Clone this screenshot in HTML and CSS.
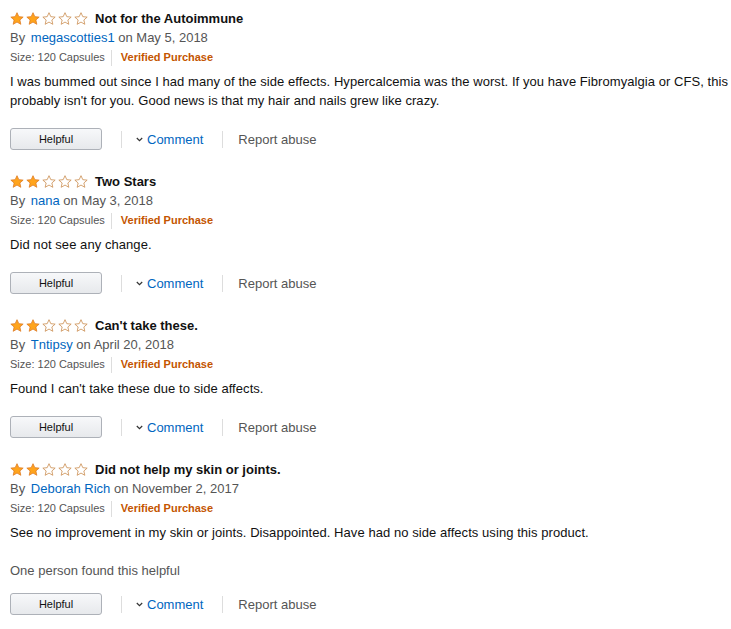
FILE: index.html
```html
<!DOCTYPE html>
<html>
<head>
<meta charset="utf-8">
<link rel="stylesheet" href="styles.css">
</head>
<body>
<svg width="0" height="0" class="defs">
  <defs>
    <symbol id="sf" viewBox="0 0 16 15">
      <path d="M8 0.8 L10.1 5.4 L15.1 5.9 L11.3 9.2 L12.4 14.2 L8 11.6 L3.6 14.2 L4.7 9.2 L0.9 5.9 L5.9 5.4 Z" fill="#ffa41c" stroke="#de7921" stroke-width="0.9" stroke-linejoin="round"/>
    </symbol>
    <symbol id="se" viewBox="0 0 16 15">
      <path d="M8 0.8 L10.1 5.4 L15.1 5.9 L11.3 9.2 L12.4 14.2 L8 11.6 L3.6 14.2 L4.7 9.2 L0.9 5.9 L5.9 5.4 Z" fill="#fff" stroke="#c98a4b" stroke-width="0.9" stroke-linejoin="round"/>
    </symbol>
    <symbol id="chev" viewBox="0 0 7 5">
      <path d="M0.8 1 L3.5 3.7 L6.2 1" fill="none" stroke="#333" stroke-width="1.2"/>
    </symbol>
  </defs>
</svg>
<div class="reviews">

  <div class="review">
    <div class="title-row">
      <span class="stars"><svg class="star"><use href="#sf"/></svg><svg class="star"><use href="#sf"/></svg><svg class="star"><use href="#se"/></svg><svg class="star"><use href="#se"/></svg><svg class="star"><use href="#se"/></svg></span>
      <span class="title">Not for the Autoimmune</span>
    </div>
    <div class="byline">By <a class="author">megascotties1</a> on May 5, 2018</div>
    <div class="meta"><span class="size">Size: 120 Capsules</span><span class="sep"></span><span class="verified">Verified Purchase</span></div>
    <div class="body">I was bummed out since I had many of the side effects. Hypercalcemia was the worst. If you have Fibromyalgia or CFS, this probably isn't for you. Good news is that my hair and nails grew like crazy.</div>
    <div class="actions">
      <button class="helpful">Helpful</button>
      <span class="sep tall"></span>
      <a class="comment"><svg class="chev"><use href="#chev"/></svg>Comment</a>
      <span class="sep tall"></span>
      <a class="report">Report abuse</a>
    </div>
  </div>

  <div class="review">
    <div class="title-row">
      <span class="stars"><svg class="star"><use href="#sf"/></svg><svg class="star"><use href="#sf"/></svg><svg class="star"><use href="#se"/></svg><svg class="star"><use href="#se"/></svg><svg class="star"><use href="#se"/></svg></span>
      <span class="title">Two Stars</span>
    </div>
    <div class="byline">By <a class="author">nana</a> on May 3, 2018</div>
    <div class="meta"><span class="size">Size: 120 Capsules</span><span class="sep"></span><span class="verified">Verified Purchase</span></div>
    <div class="body">Did not see any change.</div>
    <div class="actions">
      <button class="helpful">Helpful</button>
      <span class="sep tall"></span>
      <a class="comment"><svg class="chev"><use href="#chev"/></svg>Comment</a>
      <span class="sep tall"></span>
      <a class="report">Report abuse</a>
    </div>
  </div>

  <div class="review">
    <div class="title-row">
      <span class="stars"><svg class="star"><use href="#sf"/></svg><svg class="star"><use href="#sf"/></svg><svg class="star"><use href="#se"/></svg><svg class="star"><use href="#se"/></svg><svg class="star"><use href="#se"/></svg></span>
      <span class="title">Can't take these.</span>
    </div>
    <div class="byline">By <a class="author">Tntipsy</a> on April 20, 2018</div>
    <div class="meta"><span class="size">Size: 120 Capsules</span><span class="sep"></span><span class="verified">Verified Purchase</span></div>
    <div class="body">Found I can't take these due to side affects.</div>
    <div class="actions">
      <button class="helpful">Helpful</button>
      <span class="sep tall"></span>
      <a class="comment"><svg class="chev"><use href="#chev"/></svg>Comment</a>
      <span class="sep tall"></span>
      <a class="report">Report abuse</a>
    </div>
  </div>

  <div class="review">
    <div class="title-row">
      <span class="stars"><svg class="star"><use href="#sf"/></svg><svg class="star"><use href="#sf"/></svg><svg class="star"><use href="#se"/></svg><svg class="star"><use href="#se"/></svg><svg class="star"><use href="#se"/></svg></span>
      <span class="title">Did not help my skin or joints.</span>
    </div>
    <div class="byline">By <a class="author">Deborah Rich</a> on November 2, 2017</div>
    <div class="meta"><span class="size">Size: 120 Capsules</span><span class="sep"></span><span class="verified">Verified Purchase</span></div>
    <div class="body">See no improvement in my skin or joints. Disappointed. Have had no side affects using this product.</div>
    <div class="count">One person found this helpful</div>
    <div class="actions after-count">
      <button class="helpful">Helpful</button>
      <span class="sep tall"></span>
      <a class="comment"><svg class="chev"><use href="#chev"/></svg>Comment</a>
      <span class="sep tall"></span>
      <a class="report">Report abuse</a>
    </div>
  </div>

</div>
</body>
</html>
```
FILE: styles.css
```css
html, body {
  margin: 0;
  padding: 0;
  background: #fff;
}
body {
  font-family: "Liberation Sans", Arial, sans-serif;
  font-size: 13px;
  color: #111;
}
.defs {
  position: absolute;
  width: 0;
  height: 0;
}
.reviews {
  padding: 9px 3px 0 10px;
}
.review {
  margin-bottom: 22px;
}
.title-row {
  display: flex;
  align-items: center;
  height: 19px;
}
.stars {
  display: flex;
  gap: 2px;
  margin-right: 7px;
}
.star {
  width: 14px;
  height: 13px;
  display: block;
}
.title {
  font-weight: bold;
  line-height: 19px;
}
.byline {
  line-height: 19px;
  color: #555;
}
.author {
  color: #0066c0;
  margin: 0 0 0 2px;
}
.meta {
  display: flex;
  align-items: center;
  margin-top: 1px;
  line-height: 19px;
  font-size: 11px;
  color: #555;
}
.sep {
  display: inline-block;
  width: 1px;
  height: 16px;
  background: #ddd;
  margin: 0 9px 0 6px;
}
.verified {
  color: #c45500;
  font-weight: bold;
}
.body {
  margin-top: 5px;
  line-height: 19px;
  letter-spacing: 0.06px;
}
.count {
  margin-top: 19px;
  line-height: 19px;
  color: #555;
}
.actions {
  display: flex;
  align-items: center;
  margin-top: 18px;
  height: 22px;
}
.actions.after-count {
  margin-top: 13px;
}
.helpful {
  box-sizing: border-box;
  width: 92px;
  height: 22px;
  border: 1px solid #adb1b8;
  border-radius: 3px;
  background: linear-gradient(#f7f8fa, #e7e9ec);
  font-family: inherit;
  font-size: 11px;
  color: #111;
  padding: 0;
  margin: 0;
}
.sep.tall {
  height: 17px;
  margin: 0 11px 0 19px;
}
.sep.tall + .report {
  margin-left: 4px;
}
.comment {
  color: #0066c0;
  display: flex;
  align-items: center;
}
.chev {
  width: 7px;
  height: 5px;
  display: block;
  margin: 0 4px 0 3px;
}
.report {
  color: #555;
}
```
